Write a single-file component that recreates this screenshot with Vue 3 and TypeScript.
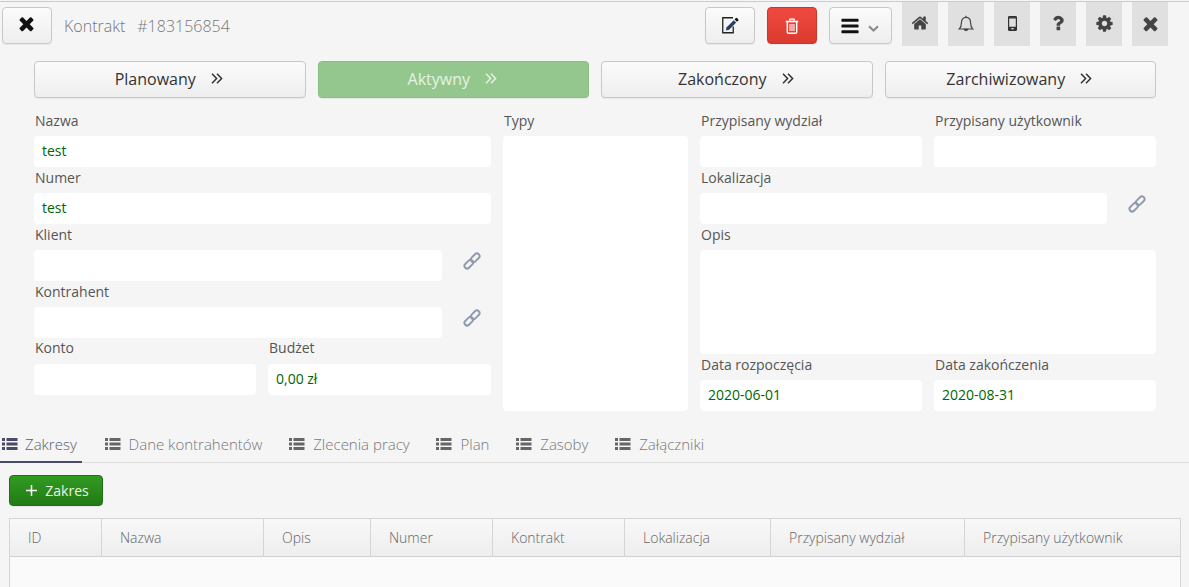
<script setup lang="ts">
const stages = [
  { label: 'Planowany', active: false },
  { label: 'Aktywny', active: true },
  { label: 'Zakończony', active: false },
  { label: 'Zarchiwizowany', active: false },
]
const tabs = ['Zakresy', 'Dane kontrahentów', 'Zlecenia pracy', 'Plan', 'Zasoby', 'Załączniki']
const cols = [
  { name: 'ID', width: 92 },
  { name: 'Nazwa', width: 162 },
  { name: 'Opis', width: 107 },
  { name: 'Numer', width: 122 },
  { name: 'Kontrakt', width: 132 },
  { name: 'Lokalizacja', width: 146 },
  { name: 'Przypisany wydział', width: 194 },
  { name: 'Przypisany użytkownik', width: 217 },
]
const times = 'M1490 1322q0 40-28 68l-136 136q-28 28-68 28t-68-28l-294-294-294 294q-28 28-68 28t-68-28l-136-136q-28-28-28-68t28-68l294-294-294-294q-28-28-28-68t28-68l136-136q28-28 68-28t68 28l294 294 294-294q28-28 68-28t68 28l136 136q28 28 28 68t-28 68l-294 294 294 294q28 28 28 68z'
const bars = 'M1664 1344v128q0 26-19 45t-45 19h-1408q-26 0-45-19t-19-45v-128q0-26 19-45t45-19h1408q26 0 45 19t19 45zm0-512v128q0 26-19 45t-45 19h-1408q-26 0-45-19t-19-45v-128q0-26 19-45t45-19h1408q26 0 45 19t19 45zm0-512v128q0 26-19 45t-45 19h-1408q-26 0-45-19t-19-45v-128q0-26 19-45t45-19h1408q26 0 45 19t19 45z'
const home = 'M1472 992v480q0 26-19 45t-45 19h-384v-384h-256v384h-384q-26 0-45-19t-19-45v-480q0-1 .5-3t.5-3l575-474 575 474q1 2 1 6zm223-69l-62 74q-8 9-21 11h-3q-13 0-21-7l-692-577-692 577q-12 8-24 7-13-2-21-11l-62-74q-8-10-7-23.5t11-21.5l719-599q32-26 76-26t76 26l244 204v-195q0-14 9-23t23-9h192q14 0 23 9t9 23v408l219 182q10 8 11 21.5t-7 23.5z'
const question = 'M1088 1256v240q0 16-12 28t-28 12h-240q-16 0-28-12t-12-28v-240q0-16 12-28t28-12h240q16 0 28 12t12 28zm316-600q0 54-15.5 101t-35 76.5-55 59.5-57.5 43.5-61 35.5q-41 23-68.5 65t-27.5 67q0 17-12 32.5t-28 15.5h-240q-15 0-25.5-18.5t-10.5-37.5v-45q0-83 65-156.5t143-108.5q59-27 84-56t25-76q0-42-46.5-74t-107.5-32q-65 0-108 29-35 25-107 115-13 16-31 16-12 0-25-8l-164-125q-13-10-15.5-25t5.5-28q160-266 464-266 80 0 161 31t146 83 106 127.5 41 158.5z'
const cog = 'M1152 896q0-106-75-181t-181-75-181 75-75 181 75 181 181 75 181-75 75-181zm512-109v222q0 12-8 23t-20 13l-185 28q-19 54-39 91 35 50 107 138 10 12 10 25t-9 23q-27 37-99 108t-94 71q-12 0-26-9l-138-108q-44 23-91 38-16 136-29 186-7 28-36 28h-222q-14 0-24.5-8.5t-11.5-21.5l-28-184q-49-16-90-37l-141 107q-10 9-25 9-14 0-25-11-126-114-165-168-7-10-7-23 0-12 8-23 15-21 51-66.5t54-70.5q-27-50-41-99l-183-27q-13-2-21-12.5t-8-23.5v-222q0-12 8-23t19-13l186-28q14-46 39-92-40-57-107-138-10-12-10-24 0-10 9-23 26-36 98.5-107.5t94.5-71.5q13 0 26 10l138 107q44-23 91-38 16-136 29-186 7-28 36-28h222q14 0 24.5 8.5t11.5 21.5l28 184q49 16 90 37l142-107q9-9 24-9 13 0 25 10 129 119 165 170 7 8 7 22 0 12-8 23-15 21-51 66.5t-54 70.5q26 50 41 98l183 28q13 2 21 12.5t8 23.5z'
</script>

<template>
  <div class="page">
    <header class="top">
      <button class="btn close"><svg class="i21" viewBox="0 0 1792 1792"><path :d="times" /></svg></button>
      <div class="title"><span>Kontrakt</span><span>#183156854</span></div>
      <button class="btn edit">
        <svg width="17" height="17" viewBox="0 0 17 17">
          <path d="M11 .75H.75v15h10.500V9.500" fill="none" stroke="#222" stroke-width="1.300" />
          <path d="M3.800 13.600l.9-3.300L11.800 3.200l2.400 2.400-7.100 7.100z" fill="#1f3f66" />
          <path d="M12.600 2.400l1.300-1.300a.8.8 0 0 1 1.100 0l1.300 1.300a.8.8 0 0 1 0 1.100L15 4.800z" fill="#111" />
        </svg>
      </button>
      <button class="btn danger">
        <svg width="14" height="16" viewBox="0 0 14 16" fill="none" stroke="#fff">
          <path d="M.8 3.500h12.400" stroke-width="1.600" />
          <path d="M4.800 3V1.200h4.400V3" stroke-width="1.200" />
          <path d="M2.300 4v10.200a1 1 0 0 0 1 1h7.400a1 1 0 0 0 1-1V4" stroke-width="1.400" />
          <path d="M5 6v7M7 6v7M9 6v7" stroke-width="1.100" />
        </svg>
      </button>
      <button class="btn menu">
        <svg class="i20" viewBox="0 0 1792 1792"><path :d="bars" /></svg>
        <svg width="11" height="7" viewBox="0 0 11 7"><path d="M1 1.200l4.500 4.300L10 1.200" fill="none" stroke="#8a8a8a" stroke-width="2" /></svg>
      </button>
      <nav class="tools">
        <a class="tool"><svg class="i18 g" viewBox="0 0 1792 1792"><path :d="home" /></svg></a>
        <a class="tool">
          <svg width="16" height="17" viewBox="0 0 16 17" fill="none" stroke="#444" stroke-width="1.200">
            <path d="M1.300 14c1.700-1.500 2.100-3.400 2.100-6.200C3.400 4.500 5.300 2.300 8 2.300s4.600 2.200 4.600 5.500c0 2.800.4 4.700 2.100 6.200z" />
            <path d="M6.300 14.300a1.800 1.800 0 0 0 3.400 0z" fill="#444" />
            <path d="M8 .8v1.500" />
          </svg>
        </a>
        <a class="tool">
          <svg width="9" height="15" viewBox="0 0 9 15">
            <rect x=".6" y=".6" width="7.800" height="13.800" rx=".8" fill="none" stroke="#333" stroke-width="1.200" />
            <path d="M0 1.800h9" stroke="#333" stroke-width="1.400" />
            <path d="M0 12.500h9" stroke="#333" stroke-width="3.500" />
            <rect x="3.300" y="12" width="2.400" height="1.300" fill="#ddd" />
          </svg>
        </a>
        <a class="tool"><svg class="i20 g" viewBox="0 0 1792 1792"><path :d="question" /></svg></a>
        <a class="tool"><svg class="i19 g" viewBox="0 0 1792 1792"><path :d="cog" /></svg></a>
        <a class="tool"><svg class="i21 g" viewBox="0 0 1792 1792"><path :d="times" /></svg></a>
      </nav>
    </header>

    <div class="stages">
      <button v-for="s in stages" :key="s.label" class="btn stage" :class="{ on: s.active }">
        <span>{{ s.label }}</span>
        <svg width="12" height="11" viewBox="0 0 12 11" fill="none" stroke="currentColor" stroke-width="1.500">
          <path d="M1 .8l4.600 4.700L1 10.200M6 .8l4.600 4.700L6 10.200" />
        </svg>
      </button>
    </div>

    <section class="form">
      <div class="col">
        <label class="field"><span>Nazwa</span><div class="input">test</div></label>
        <label class="field"><span>Numer</span><div class="input">test</div></label>
        <div class="field"><span>Klient</span>
          <div class="linked"><div class="input"></div>
            <svg class="link" width="18" height="18" viewBox="0 0 17 17" fill="none" stroke="#8f9bad" stroke-width="1.800"><g transform="rotate(-45 8.500 8.500)"><rect x="-.5" y="6" width="9.500" height="5" rx="2.500" /><rect x="8" y="6" width="9.500" height="5" rx="2.500" /></g></svg>
          </div>
        </div>
        <div class="field"><span>Kontrahent</span>
          <div class="linked"><div class="input"></div>
            <svg class="link" width="18" height="18" viewBox="0 0 17 17" fill="none" stroke="#8f9bad" stroke-width="1.800"><g transform="rotate(-45 8.500 8.500)"><rect x="-.5" y="6" width="9.500" height="5" rx="2.500" /><rect x="8" y="6" width="9.500" height="5" rx="2.500" /></g></svg>
          </div>
        </div>
        <div class="pair left">
          <label class="field"><span>Konto</span><div class="input"></div></label>
          <label class="field"><span>Budżet</span><div class="input">0,00 zł</div></label>
        </div>
      </div>

      <div class="col typy">
        <span class="lbl">Typy</span>
        <div class="input fill"></div>
      </div>

      <div class="col">
        <div class="pair">
          <label class="field"><span>Przypisany wydział</span><div class="input"></div></label>
          <label class="field"><span>Przypisany użytkownik</span><div class="input"></div></label>
        </div>
        <div class="field"><span>Lokalizacja</span>
          <div class="linked"><div class="input"></div>
            <svg class="link" width="18" height="18" viewBox="0 0 17 17" fill="none" stroke="#8f9bad" stroke-width="1.800"><g transform="rotate(-45 8.500 8.500)"><rect x="-.5" y="6" width="9.500" height="5" rx="2.500" /><rect x="8" y="6" width="9.500" height="5" rx="2.500" /></g></svg>
          </div>
        </div>
        <label class="field"><span>Opis</span><div class="input area"></div></label>
        <div class="pair">
          <label class="field"><span>Data rozpoczęcia</span><div class="input">2020-06-01</div></label>
          <label class="field"><span>Data zakończenia</span><div class="input">2020-08-31</div></label>
        </div>
      </div>
    </section>

    <nav class="tabs">
      <a v-for="(t, n) in tabs" :key="t" class="tab" :class="{ current: n === 0 }">
        <svg width="16" height="13" viewBox="0 0 16 13" fill="currentColor">
          <rect y="1" width="3" height="3" /><rect y="5.500" width="3" height="3" /><rect y="10" width="3" height="3" />
          <rect x="4.500" y="1" width="11" height="3" /><rect x="4.500" y="5.500" width="11" height="3" /><rect x="4.500" y="10" width="11" height="3" />
        </svg>
        <span>{{ t }}</span>
      </a>
    </nav>

    <button class="btn add">
      <svg width="11" height="11" viewBox="0 0 11 11"><path d="M5.500 0v11M0 5.500h11" stroke="#fff" stroke-width="1.500" /></svg>
      <span>Zakres</span>
    </button>

    <div class="table">
      <div class="thead">
        <div v-for="c in cols" :key="c.name" class="th" :style="{ width: c.width + 'px' }">{{ c.name }}</div>
      </div>
    </div>
  </div>
</template>

<style>
html, body { margin: 0; background: #f5f5f5; overflow: hidden; }
</style>

<style scoped>
.page {
  height: 587px;
  overflow: hidden;
  background: #f5f5f5;
  font-family: "Open Sans", sans-serif;
  font-size: 14px;
  color: #555;
  padding-top: 1px;
  box-sizing: border-box;
}
.top { display: flex; align-items: flex-start; height: 44px; padding-left: 2px; border-top: 1px solid #ccc; }
.btn {
  font-family: inherit;
  box-sizing: border-box;
  border: 1px solid #c8c8c8;
  border-radius: 4px;
  background: linear-gradient(#fbfbfb, #eeeeee);
  box-shadow: 0 1px 1px rgba(0, 0, 0, .06);
  display: flex;
  align-items: center;
  justify-content: center;
  padding: 0;
  cursor: pointer;
}
.close { width: 50px; height: 37px; margin-top: 5px; padding: 0 2px 4px 0; }
.i18 { width: 18px; height: 18px; }
.i19 { width: 19px; height: 19px; }
.i20 { width: 20px; height: 20px; }
.i21 { width: 21px; height: 21px; }
.g { fill: #444; }
.close svg { fill: #111; }
.title { display: flex; gap: 12px; margin: 13px 0 0 12px; font-size: 16px; line-height: 22px; color: #777; font-weight: 300; flex: 1; }
.edit, .danger { width: 50px; height: 37px; margin-top: 5px; margin-right: 12px; }
.edit svg { margin-bottom: 1px; }
.danger { background: linear-gradient(#ef4a3f, #dc3a2f); border-color: #c9362c; }
.menu { width: 63px; height: 37px; margin-top: 5px; gap: 8px; padding-left: 10px; justify-content: flex-start; }
.menu svg:first-child { fill: #111; }
.menu svg:last-child { margin-top: 6px; }
.tools { display: flex; gap: 10px; margin: 0 21px 0 10px; }
.tool { width: 36px; height: 44px; background: #e0e0e0; display: flex; align-items: center; justify-content: center; padding-bottom: 2px; box-sizing: border-box; }

.stages {
  display: grid;
  grid-template-columns: repeat(4, 1fr);
  gap: 12px;
  padding: 15px 33px 0 34px;
}
.stage { height: 37px; gap: 15px; font-size: 16px; color: #333; padding: 0 2px 2px 0; }
.stage.on { background: #94c78d; border-color: #8abf83; color: #e6f3e3; }

.form {
  display: grid;
  grid-template-columns: 457px 185px 456px;
  gap: 12px;
  padding: 12px 33px 0 34px;
}
.col { display: flex; flex-direction: column; }
.field { display: block; }
.pair .field { flex: 1 1 0; min-width: 0; }
.field > span, .lbl { display: block; height: 26px; line-height: 22px; padding-left: 1px; color: #555; }
.left .field > span { line-height: 20px; }
.input {
  background: #fff;
  border-radius: 4px;
  height: 31px;
  line-height: 29px;
  padding-left: 8px;
  box-sizing: border-box;
  color: #060;
  flex: 1;
}
.linked { display: flex; align-items: center; }
.link { margin: 0 10px 10px 21px; flex: none; }
.pair { display: flex; gap: 12px; }
.pair.left .field:first-child { flex: 0 0 222px; }
.fill { height: 275px; flex: none; }
.area { height: 104px; }

.tabs {
  display: flex;
  gap: 20.800px;
  height: 31px;
  margin-top: 20px;
  border-bottom: 1px solid #ddd;
}
.tab { display: flex; gap: 8px; align-items: center; height: 32px; padding: 0 4px 6px 2px; font-size: 15px; font-weight: 300; color: #777; box-sizing: border-box; }
.tab svg { color: #666; margin-top: -2px; flex: none; }
.current { border-bottom: 2px solid #4a4a6a; color: #5c5c68; padding: 0 5px 4px 2px; gap: 7px; }
.current svg { color: #4a4a6a; }

.add {
  margin: 12px 0 0 9px;
  width: 94px;
  height: 31px;
  gap: 8px;
  padding-left: 3px;
  font-size: 14px;
  color: #e8f5e3;
  background: linear-gradient(#319b22, #227a15);
  border-color: #1f6f14;
}
.table {
  margin: 12px 8px 0 9px;
  border: 1px solid #d5d5d5;
  border-bottom: 0;
  height: 80px;
  background: #fafafa;
}
.thead { display: flex; height: 37px; border-bottom: 1px solid #d0d0d0; background: linear-gradient(#f8f8f8, #eeeeee); }
.th {
  box-sizing: border-box;
  border-right: 1px solid #d5d5d5;
  line-height: 37px;
  padding-left: 18px;
  color: #666;
  font-weight: 300;
  flex: none;
}
.th:last-child { border-right: 0; }
</style>
